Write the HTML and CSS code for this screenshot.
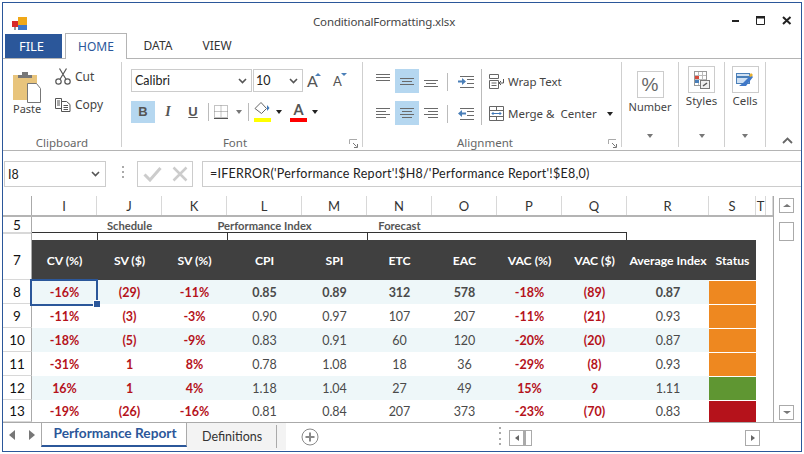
FILE: index.html
```html
<!DOCTYPE html>
<html lang="en">
<head>
    <meta charset="UTF-8">
    <title>ConditionalFormatting.xlsx</title>
    <link rel="stylesheet" href="styles.css">
</head>
<body>
<div class="window">
    <div class="titlebar">
        <svg class="logo" width="15" height="14" viewBox="0 0 15 14">
            <rect x="6" y="0" width="9" height="8" fill="#f0a818"/>
            <rect x="6" y="8" width="9" height="5" fill="#3f78c8"/>
            <rect x="0" y="4" width="6" height="6" fill="#d82a2a"/>
            <rect x="2" y="10" width="2" height="3" fill="#999"/>
        </svg>
        <div class="doc-title">ConditionalFormatting.xlsx</div>
        <div class="win-controls">
            <svg width="8" height="10" viewBox="0 0 8 10"><rect x="0" y="4" width="7" height="2" fill="#222"/></svg>
            <svg width="10" height="9" viewBox="0 0 10 9"><path d="M.5 1.5h8v7h-8z" fill="none" stroke="#222"/><rect x="0" y="0" width="9" height="2.5" fill="#222"/></svg>
            <svg width="10" height="9" viewBox="0 0 10 9"><path d="M1 1l7.500 7M8.500 1L1 8" stroke="#222" stroke-width="2" fill="none"/></svg>
        </div>
    </div>

    <div class="menu-tabs">
        <div class="file-tab">FILE</div>
        <div class="menu-tab selected">HOME</div>
        <div class="menu-tab">DATA</div>
        <div class="menu-tab view">VIEW</div>
    </div>

    <div class="ribbon">
        <div class="group clipboard">
            <div class="group-body">
                <div class="paste">
                    <svg width="29" height="31" viewBox="0 0 29 31">
                        <rect x="0" y="3" width="24" height="25" fill="#e8c47c"/>
                        <path d="M5 6V3h4V0h6v3h4v3z" fill="#777"/>
                        <path d="M14.500 11.500h9l4 5v14h-13z" fill="#fff" stroke="#777"/>
                    </svg>
                    <span>Paste</span>
                </div>
                <div class="clip-actions">
                    <div class="clip-btn">
                        <svg width="16" height="17" viewBox="0 0 16 17" fill="none" stroke="#555" stroke-width="1.200">
                            <circle cx="3.500" cy="13.500" r="2.700"/><circle cx="12.500" cy="13.500" r="2.700"/>
                            <path d="M5 11.300L11.500.500M11 11.300L4.500.500"/>
                        </svg>
                        <span>Cut</span>
                    </div>
                    <div class="clip-btn">
                        <svg width="16" height="14" viewBox="0 0 16 14" fill="none" stroke="#555">
                            <path d="M.5.500h6v10h-6zM2 3h3M2 5h3M2 7h3"/>
                            <path d="M6.500 3.500h5l3.500 3v7H6.500z" fill="#fff"/>
                            <path d="M8.500 7.500h4.500M8.500 9.500h4.500M8.500 11.500h4.500"/>
                        </svg>
                        <span>Copy</span>
                    </div>
                </div>
            </div>
            <div class="group-label">Clipboard</div>
        </div>

        <div class="group font-group">
            <div class="font-row">
                <div class="combo font-name">Calibri<svg class="chev" width="9" height="6" viewBox="0 0 9 6"><path d="M1 1l3.500 3.500L8 1" fill="none" stroke="#555" stroke-width="1.600"/></svg></div>
                <div class="combo font-size">10<svg class="chev" width="9" height="6" viewBox="0 0 9 6"><path d="M1 1l3.500 3.500L8 1" fill="none" stroke="#555" stroke-width="1.600"/></svg></div>
                <div class="grow-a big">A<i class="tri up"></i></div>
                <div class="grow-a small">A<i class="tri down"></i></div>
            </div>
            <div class="font-row tools">
                <div class="tool active bold">B</div>
                <div class="tool italic">I</div>
                <div class="tool under">U</div>
                <i class="rule"></i>
                <svg class="borders" width="14" height="14" viewBox="0 0 14 14" fill="none" stroke="#888" stroke-dasharray="1 1">
                    <path d="M.5.500h13v12H.5zM7 .500v12M.5 6.500h13"/>
                    <path d="M0 13.500h14" stroke="#555" stroke-dasharray="none"/>
                </svg>
                <i class="arrow gray"></i>
                <i class="rule"></i>
                <div class="swatch fill">
                    <svg width="17" height="13" viewBox="0 0 17 13">
                        <path d="M1 6.500L7 .500l5.500 6-5 5z" fill="#fff" stroke="#666"/>
                        <path d="M13 3l2.500 3-2.500 3z" fill="#3f78b8"/>
                    </svg>
                    <i class="bar yellow"></i>
                </div>
                <i class="arrow"></i>
                <div class="swatch letter"><b>A</b><i class="bar red"></i></div>
                <i class="arrow"></i>
            </div>
            <div class="group-label">Font</div>
            <svg class="launcher" width="9" height="9" viewBox="0 0 9 9"><path d="M.5 5V.500H8" fill="none" stroke="#aaa"/><path d="M4 4l3.500 3.500M8.500 5v3.500H5" fill="none" stroke="#777"/></svg>
        </div>

        <div class="group align-group">
            <div class="align-body">
                <div class="align-grid">
                    <div class="align-btn"><svg width="24" height="24" viewBox="0 0 24 24"><path class="ln" d="M5 5.500h14M5 8.500h14M5 11.500h14"/></svg></div>
                    <div class="align-btn on"><svg width="24" height="24" viewBox="0 0 24 24"><path class="ln" d="M5 9.500h14M7 12.500h10M5 15.500h14"/></svg></div>
                    <div class="align-btn"><svg width="24" height="24" viewBox="0 0 24 24"><path class="ln" d="M5 11.500h14M7 14.500h10M5 17.500h14"/></svg></div>
                    <div class="align-btn"><svg width="24" height="24" viewBox="0 0 24 24"><path class="ln" d="M5 7.500h14M5 10.500h10M5 13.500h14M5 16.500h10"/></svg></div>
                    <div class="align-btn on"><svg width="24" height="24" viewBox="0 0 24 24"><path class="ln" d="M5 7.500h14M7 10.500h10M5 13.500h14M7 16.500h10"/></svg></div>
                    <div class="align-btn"><svg width="24" height="24" viewBox="0 0 24 24"><path class="ln" d="M5 7.500h14M9 10.500h10M5 13.500h14M9 16.500h10"/></svg></div>
                </div>
                <div class="indent-col">
                    <div class="indent"><i class="rule"></i><svg width="16" height="14" viewBox="0 0 16 14"><path class="ln" d="M2 1.500h14M9 4.500h7M9 8.500h7M2 12.500h14"/><path d="M0 5.500h4V3l4 3.500L4 10V7.500H0z" fill="#4a7fb8"/></svg></div>
                    <div class="indent"><i class="rule"></i><svg width="16" height="14" viewBox="0 0 16 14"><path class="ln" d="M2 1.500h14M9 4.500h7M9 8.500h7M2 12.500h14"/><path d="M8 5.500H4V3L0 6.500 4 10V7.500h4z" fill="#4a7fb8"/></svg></div>
                </div>
                <div class="wrap-col">
                    <div class="wrap-btn">
                        <svg width="15" height="15" viewBox="0 0 15 15" fill="none" stroke="#666"><path d="M.5.500h9v4h-9zM.5 6.500h9v8h-9zM2.500 9h5M2.500 11.500h5"/><path d="M14.500 5v4h-4M12 7l-2 2 2 2" stroke="#555"/></svg>
                        <span>Wrap Text</span>
                    </div>
                    <div class="wrap-btn merge">
                        <svg width="15" height="15" viewBox="0 0 15 15" fill="none" stroke="#666"><path d="M.5.500h14v14H.5zM.5 4.500h14M.5 10.500h14M7.500.500v4M7.500 10.500v4"/><path d="M3 7.500h9M4.500 6L3 7.500 4.500 9M10.500 6L12 7.500 10.500 9" stroke="#3f78b8"/></svg>
                        <span>Merge &amp;&nbsp; Center</span>
                        <i class="arrow"></i>
                    </div>
                </div>
            </div>
            <div class="group-label">Alignment</div>
            <svg class="launcher" width="9" height="9" viewBox="0 0 9 9"><path d="M.5 5V.500H8" fill="none" stroke="#aaa"/><path d="M4 4l3.500 3.500M8.500 5v3.500H5" fill="none" stroke="#777"/></svg>
        </div>

        <div class="group drop number">
            <div class="drop-box"><span class="percent">%</span></div>
            <div class="drop-label">Number</div>
            <i class="arrow gray"></i>
        </div>
        <div class="group drop styles">
            <div class="drop-box">
                <svg width="16" height="18" viewBox="0 0 16 18">
                    <rect x=".5" y=".5" width="12" height="14" fill="#fff" stroke="#999"/>
                    <path d="M4.500 1v13M8.500 1v13M1 4.500h11M1 8.500h11" stroke="#bbb"/>
                    <rect x="1" y="5" width="4" height="3" fill="#d84a3a"/>
                    <rect x="1" y="9" width="4" height="3" fill="#4a7fb8"/>
                    <rect x="6.500" y="9.500" width="9" height="8" fill="#eee" stroke="#777"/>
                    <path d="M9 15l4-3" stroke="#555" stroke-width="1.500"/>
                </svg>
            </div>
            <div class="drop-label">Styles</div>
            <i class="arrow gray"></i>
        </div>
        <div class="group drop cells">
            <div class="drop-box">
                <svg width="18" height="17" viewBox="0 0 18 17">
                    <rect x=".5" y="2.500" width="13" height="10" fill="#cfe0f3" stroke="#4a7fb8"/>
                    <path d="M1 6h12" stroke="#4a7fb8" stroke-width="2"/>
                    <path d="M3 15h7l7-9-2-2-8 8z" fill="#3f78c8"/>
                    <path d="M13 5l2-3 2 2-2 2z" fill="#e8b030"/>
                </svg>
            </div>
            <div class="drop-label">Cells</div>
            <i class="arrow gray"></i>
        </div>
        <svg class="collapse" width="11" height="7" viewBox="0 0 11 7"><path d="M1 6l4.500-4.500L10 6" fill="none" stroke="#666" stroke-width="1.800"/></svg>
    </div>

    <div class="formula-row">
        <div class="name-box">I8<svg class="chev" width="9" height="6" viewBox="0 0 9 6"><path d="M1 1l3.500 3.500L8 1" fill="none" stroke="#555" stroke-width="1.600"/></svg></div>
        <div class="grip"><i></i><i></i><i></i></div>
        <div class="confirm">
            <svg width="19" height="16" viewBox="0 0 19 16"><path d="M1.500 8.500l5.500 5.500L17.500 2" fill="none" stroke="#ccc" stroke-width="3"/></svg>
            <svg width="16" height="16" viewBox="0 0 16 16"><path d="M1.500 1.500l13 13M14.500 1.500l-13 13" fill="none" stroke="#ccc" stroke-width="2.500"/></svg>
        </div>
        <div class="formula">=IFERROR('Performance Report'!$H8/'Performance Report'!$E8,0)</div>
    </div>

    <div class="sheet">
        <div class="grid">
            <div class="row col-heads">
                <div class="rh"></div>
                <div>I</div><div>J</div><div>K</div><div>L</div><div>M</div><div>N</div><div>O</div><div>P</div><div>Q</div><div>R</div><div>S</div><div>T</div><div></div>
            </div>
            <div class="row band-title">
                <div class="rh">5</div>
                <div></div><div class="c"><span>Schedule</span></div><div></div><div class="c"><span>Performance Index</span></div><div></div><div class="c"><span>Forecast</span></div>
            </div>
            <div class="row bracket">
                <div class="rh">6</div>
                <div class="b first"></div><div class="b span2"></div><div class="b span2"></div><div class="b span4"></div>
            </div>
            <div class="row dark">
                <div class="rh">7</div>
                <div>CV (%)</div><div>SV ($)</div><div>SV (%)</div><div>CPI</div><div>SPI</div><div>ETC</div><div>EAC</div><div>VAC (%)</div><div>VAC ($)</div><div>Average Index</div><div>Status</div>
            </div>
            <div class="row data stripe strong">
                <div class="rh">8</div>
                <div class="red current">-16%</div><div class="red">(29)</div><div class="red">-11%</div><div>0.85</div><div>0.89</div><div>312</div><div>578</div><div class="red">-18%</div><div class="red">(89)</div><div>0.87</div><div class="status orange"></div>
            </div>
            <div class="row data">
                <div class="rh">9</div>
                <div class="red">-11%</div><div class="red">(3)</div><div class="red">-3%</div><div>0.90</div><div>0.97</div><div>107</div><div>207</div><div class="red">-11%</div><div class="red">(21)</div><div>0.93</div><div class="status orange"></div>
            </div>
            <div class="row data stripe">
                <div class="rh">10</div>
                <div class="red">-18%</div><div class="red">(5)</div><div class="red">-9%</div><div>0.83</div><div>0.91</div><div>60</div><div>120</div><div class="red">-20%</div><div class="red">(20)</div><div>0.87</div><div class="status orange"></div>
            </div>
            <div class="row data">
                <div class="rh">11</div>
                <div class="red">-31%</div><div class="red">1</div><div class="red">8%</div><div>0.78</div><div>1.08</div><div>18</div><div>36</div><div class="red">-29%</div><div class="red">(8)</div><div>0.93</div><div class="status orange"></div>
            </div>
            <div class="row data stripe">
                <div class="rh">12</div>
                <div class="red">16%</div><div class="red">1</div><div class="red">4%</div><div>1.18</div><div>1.04</div><div>27</div><div>49</div><div class="red">15%</div><div class="red">9</div><div>1.11</div><div class="status green"></div>
            </div>
            <div class="row data last">
                <div class="rh">13</div>
                <div class="red">-19%</div><div class="red">(26)</div><div class="red">-16%</div><div>0.81</div><div>0.84</div><div>207</div><div>373</div><div class="red">-23%</div><div class="red">(70)</div><div>0.83</div><div class="status crimson"></div>
            </div>
        </div>
        <div class="vscroll">
            <div class="sb-btn"><i class="tri up gray"></i></div>
            <div class="sb-thumb"></div>
            <div class="sb-btn bottom"><i class="tri down gray"></i></div>
        </div>
    </div>

    <div class="tabbar">
        <div class="sheet-nav"><i class="nav-l"></i><i class="nav-r"></i></div>
        <div class="sheet-tab selected">Performance Report</div>
        <div class="sheet-tab other"><span>Definitions</span></div>
        <svg class="add" width="18" height="18" viewBox="0 0 18 18" fill="none" stroke="#888"><circle cx="9" cy="9" r="8"/><path d="M4.500 9h9M9 4.500v9" stroke-width="2"/></svg>
        <div class="grip tab-grip"><i></i><i></i><i></i><i></i></div>
        <div class="hbtn"><i class="nav-l small"></i></div>
        <div class="hthumb"></div>
        <div class="hbtn right"><i class="nav-r small"></i></div>
    </div>
</div>
</body>
</html>
```

FILE: styles.css
```css
*{
    margin: 0;
    padding: 0;
    box-sizing: border-box;
}
i{
    display: block;
    font-style: normal;
}
svg{
    display: block;
    flex: none;
}
.ln{
    fill: none;
    stroke: #6a6a6a;
}
body{
    background: #fff;
    font-family: "Noto Sans", sans-serif;
    font-size: 12px;
    color: #444;
}
.window{
    width: 800px;
    height: 450px;
    margin: 2px;
    border: 1px solid #2b579a;
    display: flex;
    flex-direction: column;
    overflow: hidden;
}

/* title bar */
.titlebar{
    height: 30px;
    display: flex;
    align-items: flex-start;
}
.logo{
    margin: 14px 0 0 9px;
}
.doc-title{
    margin: 10px 0 0 286px;
    width: 160px;
    font-size: 11.500px;
    letter-spacing: -.15px;
    line-height: 17px;
    color: #444;
    white-space: nowrap;
}
.win-controls{
    margin: 13px 0 0 259px;
    display: flex;
    gap: 16px;
}

/* menu tabs */
.menu-tabs{
    height: 26px;
    display: flex;
    padding-left: 2px;
    border-bottom: 1px solid #b4b4b4;
    font-size: 12px;
    color: #333;
}
.file-tab{
    width: 57px;
    height: 24px;
    margin: 1px 3px 0 0;
    padding-right: 4px;
    background: #2b579a;
    color: #fff;
    font-size: 13px;
    line-height: 24px;
    text-align: center;
}
.menu-tab{
    height: 26px;
    width: 62px;
    line-height: 25px;
    text-align: center;
}
.menu-tab.view{
    margin-left: -3px;
}
.menu-tab.selected{
    border: 1px solid #b4b4b4;
    border-bottom: 0;
    background: #fff;
    color: #2b579a;
}

/* ribbon */
.ribbon{
    height: 92px;
    flex: none;
    display: flex;
    position: relative;
    border-bottom: 1px solid #b4b4b4;
}
.group{
    position: relative;
    display: flex;
    flex-direction: column;
    border-right: 1px solid #cfcfcf;
    margin: 3px 0 3px;
}
.group-body{
    flex: 1;
    display: flex;
}
.group-label{
    position: absolute;
    left: 0;
    right: 0;
    bottom: -3px;
    text-align: center;
    line-height: 15px;
    color: #666;
    font-size: 11.500px;
}
.font-group .group-label,.align-group .group-label{
    right: 14px;
}
.launcher{
    position: absolute;
    right: 4px;
    bottom: -1px;
}
.clipboard{
    width: 119px;
    padding: 10px 0 0 10px;
}
.paste{
    width: 40px;
    display: flex;
    flex-direction: column;
}
.paste svg{
    margin-bottom: -2px;
}
.paste span{
    line-height: 16px;
    font-size: 11px;
}
.clip-actions{
    margin: -4px 0 0 2px;
    display: flex;
    flex-direction: column;
    gap: 11px;
}
.clip-btn{
    height: 17px;
    display: flex;
    align-items: center;
    gap: 4px;
    font-size: 12px;
}

/* font group */
.font-group{
    width: 241px;
    padding: 7px 0 0 9px;
}
.font-row{
    display: flex;
    align-items: center;
}
.combo{
    height: 23px;
    border: 1px solid #ccc;
    display: flex;
    align-items: center;
    justify-content: space-between;
    padding: 0 4px 0 3px;
    font-family: Lato, sans-serif;
    font-size: 12.500px;
    color: #222;
}
.font-name{
    width: 121px;
}
.font-size{
    width: 50px;
    margin-left: 1px;
    padding-left: 2px;
}
.grow-a{
    position: relative;
    font-family: Lato, sans-serif;
    color: #555;
    line-height: 20px;
}
.grow-a.big{
    margin-left: 4px;
    font-size: 16px;
    width: 26px;
}
.grow-a.small{
    font-size: 13px;
}
.tri{
    width: 0;
    height: 0;
    border-left: 3px solid transparent;
    border-right: 3px solid transparent;
}
.tri.up{
    border-bottom: 3px solid #4a7fb8;
}
.tri.down{
    border-top: 3px solid #4a7fb8;
}
.grow-a .tri{
    position: absolute;
    top: 2px;
    left: 8px;
}
.tools{
    margin-top: 9px;
    height: 22px;
}
.tool{
    width: 24px;
    height: 22px;
    margin-right: 1px;
    text-align: center;
    font-family: "Liberation Sans", sans-serif;
    font-size: 13px;
    font-weight: bold;
    line-height: 22px;
    color: #555;
}
.tool.active{
    background: #b5d7f0;
}
.italic{
    font-family: "Liberation Serif", serif;
    font-style: italic;
    font-size: 14px;
}
.under{
    text-decoration: underline;
}
.rule{
    width: 1px;
    height: 18px;
    background: #bbb;
}
.tools .rule{
    margin-left: 2px;
    margin-right: 5px;
}
.borders{
    margin-right: 8px;
}
.arrow{
    width: 0;
    height: 0;
    border-left: 3.500px solid transparent;
    border-right: 3.500px solid transparent;
    border-top: 4px solid #222;
}
.arrow.gray{
    border-top-color: #777;
}
.tools .arrow{
    margin-right: 6px;
}
.tools .arrow.gray{
    margin-right: 4px;
}
.swatch{
    width: 17px;
    height: 21px;
    margin-right: 5px;
    align-self: flex-start;
    position: relative;
}
.swatch b{
    display: block;
    font-family: Lato, sans-serif;
    font-size: 14.500px;
    line-height: 17px;
    text-align: center;
    color: #555;
}
.letter{
    margin-left: 2px;
}
.fill svg{
    margin-top: 1px;
}
.bar{
    position: absolute;
    left: 0;
    right: 0;
    bottom: 0;
    height: 4px;
}
.bar.yellow{
    background: #ffff00;
}
.bar.red{
    background: #ff0000;
}

/* alignment group */
.align-group{
    width: 259px;
    padding: 7px 0 0 8px;
}
.align-body{
    display: flex;
}
.align-grid{
    display: grid;
    grid-template-columns: repeat(3, 24px);
    grid-auto-rows: 24px;
    row-gap: 8px;
}
.align-btn.on{
    background: #b5d7f0;
}
.indent-col{
    display: flex;
    flex-direction: column;
    gap: 14px;
    padding-top: 4px;
}
.indent{
    height: 18px;
    display: flex;
    align-items: center;
    margin-left: 4px;
}
.indent .rule{
    margin-right: 10px;
}
.wrap-col{
    margin-left: 7px;
    padding-left: 7px;
    width: 140px;
    border-left: 1px solid #bbb;
    height: 56px;
    display: flex;
    flex-direction: column;
    gap: 17px;
    padding-top: 5px;
}
.wrap-btn{
    height: 15px;
    display: flex;
    align-items: center;
    gap: 4px;
    font-size: 11.500px;
    color: #444;
    white-space: nowrap;
}
.merge .arrow{
    margin-left: 6px;
}

/* number, styles, cells */
.drop{
    align-items: center;
    padding-top: 4px;
    font-size: 11.500px;
}
.drop > .arrow{
    position: absolute;
    bottom: 9px;
    left: 50%;
    margin-left: -3px;
}
.number{
    width: 57px;
    padding-top: 9px;
    font-size: 11px;
}
.styles{
    width: 46px;
}
.cells{
    width: 41px;
}
.drop-box{
    width: 27px;
    height: 27px;
    border: 1px solid #ccc;
    display: flex;
    align-items: center;
    justify-content: center;
}
.percent{
    font-family: "Liberation Sans", sans-serif;
    font-size: 19px;
    color: #666;
}
.drop-label{
    margin-top: -1px;
    line-height: 17px;
    color: #444;
}
.number .drop-label{
    margin-top: 0;
}
.collapse{
    position: absolute;
    right: 8px;
    bottom: 6px;
}

/* formula row */
.formula-row{
    height: 45px;
    flex: none;
    display: flex;
    padding: 10px 0 9px 1px;
}
.name-box{
    width: 102px;
    border: 1px solid #ccc;
    display: flex;
    align-items: center;
    justify-content: space-between;
    padding: 0 5px 0 3px;
    font-family: Lato, sans-serif;
    font-size: 12.500px;
    color: #222;
}
.grip{
    display: flex;
    flex-direction: column;
    justify-content: space-between;
    width: 2px;
    margin: 5px 13px 9px 16px;
}
.grip i{
    width: 2px;
    height: 2px;
    background: #aaa;
}
.confirm{
    width: 56px;
    border: 1px solid #ccc;
    display: flex;
    align-items: center;
    padding-left: 5px;
    gap: 10px;
}
.formula{
    flex: 1;
    margin-left: 9px;
    border: 1px solid #ccc;
    border-right: 0;
    padding-left: 7px;
    font-family: Lato, sans-serif;
    font-size: 12.500px;
    letter-spacing: .25px;
    line-height: 23px;
    color: #222;
    white-space: nowrap;
}

/* sheet */
.sheet{
    height: 226px;
    flex: none;
    display: flex;
}
.grid{
    width: 771px;
    border-right: 1px solid #aaa;
    font-family: Lato, sans-serif;
    font-size: 13px;
}
.row{
    display: grid;
    grid-template-columns: 29px 65px 65px 65px 75px 65px 65px 65px 65px 65px 82px 47px 10px 7px;
}
.row > div{
    display: flex;
    align-items: center;
    justify-content: center;
    white-space: nowrap;
}
.rh{
    border-right: 1px solid #aaa;
    border-bottom: 1px solid #d8d8d8;
    color: #111;
    font-size: 13.500px;
}
.col-heads{
    height: 21px;
    border-bottom: 2px solid #b4b4b4;
    color: #333;
}
.col-heads > div{
    border-right: 1px solid #d8d8d8;
}
.col-heads .rh{
    border-right: 1px solid #aaa;
    border-bottom: 0;
}
.band-title{
    height: 15px;
    font-weight: bold;
    font-size: 11.200px;
    color: #555;
}
.band-title .rh{
    font-weight: normal;
}
.band-title .c span{
    flex: none;
}
.bracket{
    height: 8px;
    overflow: hidden;
}
.bracket .rh{
    align-items: flex-start;
    padding-top: 5px;
    border-top: 1px solid #d8d8d8;
    border-bottom: 0;
    height: 8px;
    overflow: hidden;
}
.bracket .b{
    border-top: 1px solid #333;
    border-left: 1px solid #333;
    height: 8px;
}
.bracket .first{
    border-left: 0;
}
.span2{
    grid-column: span 2;
}
.span4{
    grid-column: span 4;
    border-right: 1px solid #333;
}
.dark{
    height: 40px;
}
.dark > div{
    background: #404040;
    color: #fff;
    font-weight: bold;
    font-size: 12.200px;
}
.dark .rh{
    background: #fff;
    color: #111;
    font-weight: normal;
    font-size: 13.500px;
}
.data{
    height: 24px;
    color: #4a4a4a;
    font-size: 12.500px;
}
.data.last{
    height: 22px;
}
.data .rh{
    background: #fff;
    font-weight: normal;
    font-size: 13.500px;
}
.stripe > div{
    background: #eef7f9;
}
.strong > div{
    font-weight: bold;
}
.data .red{
    color: #b5121b;
    font-weight: bold;
}
.data .status{
    margin-top: 1px;
}
.data .orange{
    background: #ee8820;
}
.data .green{
    background: #5f9632;
}
.data .crimson{
    background: #b5121b;
}
.current{
    position: relative;
}
.current::after{
    content: "";
    position: absolute;
    left: -2px;
    top: -1px;
    right: -1px;
    bottom: -2px;
    border: 2px solid #2b579a;
}
.current::before{
    content: "";
    position: absolute;
    z-index: 1;
    right: -3px;
    bottom: -3px;
    width: 6px;
    height: 6px;
    background: #2b579a;
    border: 1px solid #fff;
    border-width: 1px 0 0 1px;
}

/* scrollbars */
.vscroll{
    flex: 1;
    display: flex;
    flex-direction: column;
    padding: 2px 0 2px 5px;
}
.sb-btn{
    width: 15px;
    height: 15px;
    border: 1px solid #aaa;
    display: flex;
    align-items: center;
    justify-content: center;
}
.sb-btn.bottom{
    margin-top: auto;
}
.tri.gray{
    border-bottom-color: #777;
    border-top-color: #777;
    border-left-width: 4px;
    border-right-width: 4px;
}
.sb-thumb{
    width: 15px;
    height: 19px;
    margin-top: 9px;
    border: 1px solid #aaa;
}

/* sheet tabs */
.tabbar{
    flex: 1;
    border-top: 1px solid #aaa;
    display: flex;
    align-items: flex-start;
}
.sheet-nav{
    width: 38px;
    height: 24px;
    display: flex;
    align-items: center;
    padding-left: 6px;
    gap: 14px;
}
.nav-l,.nav-r{
    width: 0;
    height: 0;
    border-top: 5px solid transparent;
    border-bottom: 5px solid transparent;
}
.nav-l{
    border-right: 6px solid #777;
}
.nav-r{
    border-left: 6px solid #777;
}
.nav-l.small,.nav-r.small{
    border-top-width: 3px;
    border-bottom-width: 3px;
}
.nav-l.small{
    border-right-width: 4px;
    border-right-color: #666;
}
.nav-r.small{
    border-left-width: 4px;
    border-left-color: #666;
}
.sheet-tab{
    font-family: Lato, sans-serif;
    white-space: nowrap;
}
.sheet-tab.selected{
    width: 146px;
    height: 24px;
    padding-left: 2px;
    border-left: 1px solid #aaa;
    border-right: 1px solid #aaa;
    border-bottom: 2px solid #2b579a;
    color: #2b579a;
    font-weight: bold;
    font-size: 13.700px;
    line-height: 20px;
    text-align: center;
}
.sheet-tab.other{
    width: 99px;
    height: 27px;
    padding: 2px 10px 0 15px;
    background: #f3f3f3;
    font-size: 12.500px;
    line-height: 23px;
    color: #333;
}
.sheet-tab.other span{
    display: block;
    border-right: 1px solid #aaa;
    height: 23px;
    margin-right: -1px;
}
.add{
    margin: 5px 0 0 15px;
}
.tab-grip{
    height: 18px;
    margin: 4px 8px 0 180px;
}
.hbtn{
    width: 15px;
    height: 16px;
    margin-top: 7px;
    border: 1px solid #aaa;
    display: flex;
    align-items: center;
    justify-content: center;
}
.hthumb{
    width: 8px;
    height: 16px;
    margin-top: 7px;
    border: 1px solid #aaa;
    border-left-width: 2px;
}
.hbtn.right{
    margin-left: 213px;
}
```
